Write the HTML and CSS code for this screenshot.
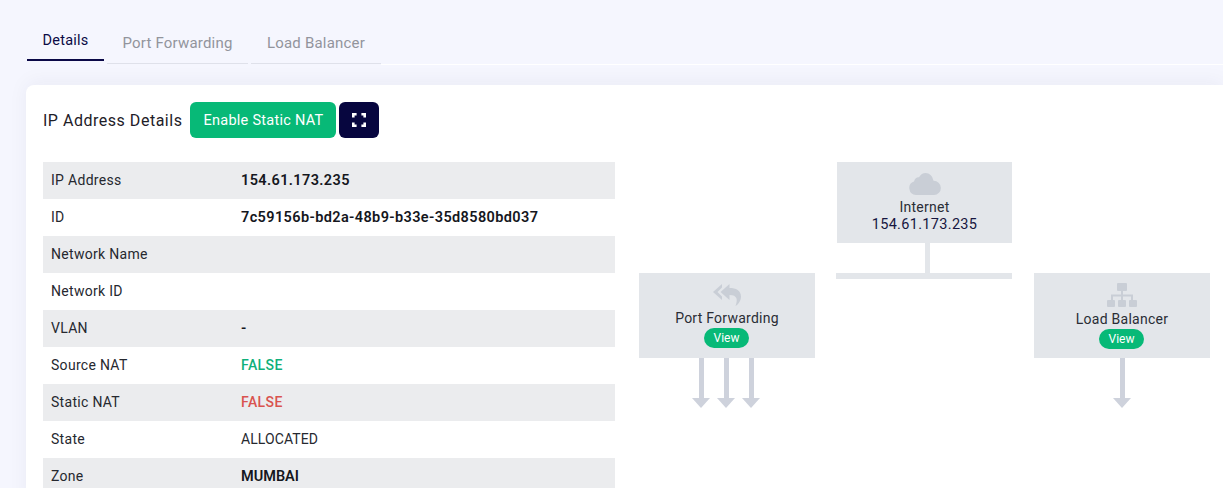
FILE: index.html
```html
<!DOCTYPE html>
<html lang="en">
<head>
<meta charset="utf-8">
<title>IP Address Details</title>
<link rel="stylesheet" href="styles.css">
</head>
<body>
<nav class="tabs">
  <a class="tab tab-details active">Details</a>
  <a class="tab tab-pf">Port Forwarding</a>
  <a class="tab tab-lb">Load Balancer</a>
  <span class="tab-rest"></span>
</nav>
<main class="card">
  <header class="card-head">
    <h2 class="title">IP Address Details</h2>
    <button class="btn btn-green">Enable Static NAT</button>
    <button class="btn btn-navy" aria-label="Expand">
      <svg width="14" height="14" viewBox="0 0 14 14" fill="none" stroke="#fff" stroke-width="2.6"><path d="M1.300 4.600V1.300H4.600M9.400 1.300h3.300V4.600M12.700 9.400v3.300H9.400M4.600 12.700H1.300V9.400"/></svg>
    </button>
  </header>
  <div class="body">
    <table class="info">
      <tr><td class="k">IP Address</td><td class="v b">154.61.173.235</td></tr>
      <tr><td class="k">ID</td><td class="v b">7c59156b-bd2a-48b9-b33e-35d8580bd037</td></tr>
      <tr><td class="k">Network Name</td><td class="v"></td></tr>
      <tr><td class="k">Network ID</td><td class="v"></td></tr>
      <tr><td class="k">VLAN</td><td class="v b">-</td></tr>
      <tr><td class="k">Source NAT</td><td class="v green">FALSE</td></tr>
      <tr><td class="k">Static NAT</td><td class="v red">FALSE</td></tr>
      <tr><td class="k">State</td><td class="v alloc">ALLOCATED</td></tr>
      <tr><td class="k">Zone</td><td class="v b zone">MUMBAI</td></tr>
    </table>
    <div class="diagram">
      <div class="node node-net">
        <svg class="ico" width="32" height="22" viewBox="0 0 32 22" fill="#c9ced6"><path d="M7 22a7 7 0 0 1-2-13.600C6 5 8 4 10 4.300C11.500 1.500 14 0 16.500 0c4 0 7 3 7.500 6.500 .3 .4 .5 .9 .5 1.300A7 7 0 0 1 25 22z"/></svg>
        <span class="name">Internet</span>
        <span class="ip">154.61.173.235</span>
      </div>
      <div class="stem"></div>
      <div class="bus"></div>
      <div class="node node-pf">
        <svg class="ico" width="28" height="23" viewBox="0 0 28 23" fill="#c9ced6"><path d="M9 1 0 9l9 8v-3.500L4.500 9 9 4.500z"/><path d="M16.500 1 7.500 9l9 8v-5c4 0 6 1 7 3.500.5 1.700.2 4.500-1 7.500 3.500-2 5.500-6 5.500-9.500C28 7.500 23 5 16.500 5z"/></svg>
        <span class="name">Port Forwarding</span>
        <span class="pill">View</span>
      </div>
      <div class="node node-lb">
        <svg class="ico" width="30" height="24" viewBox="0 0 30 24" fill="#c9ced6"><rect x="10" y="0" width="10" height="8" rx="1"/><rect x="0" y="17" width="8" height="7" rx="1"/><rect x="11" y="17" width="8" height="7" rx="1"/><rect x="22" y="17" width="8" height="7" rx="1"/><path d="M14 8h2v3.500h10V17h-2v-3.500H16V17h-2v-3.500H6V17H4v-5.500h10z"/></svg>
        <span class="name">Load Balancer</span>
        <span class="pill">View</span>
      </div>
      <span class="arrow a1"></span>
      <span class="arrow a2"></span>
      <span class="arrow a3"></span>
      <span class="arrow a4"></span>
    </div>
  </div>
</main>
</body>
</html>
```
FILE: styles.css
```css
html, body { margin: 0; height: 488px; overflow: hidden; }
body {
  background: #f5f6fe;
  font-family: Roboto, "Liberation Sans", sans-serif;
  color: #1f2430;
  font-size: 14px;
}
.tabs {
  display: flex;
  align-items: flex-end;
  height: 65px;
  padding-left: 27px;
  gap: 3px;
}
.tab {
  box-sizing: border-box;
  height: 36px;
  padding-top: 6px;
  text-align: center;
  color: #92949c;
  font-size: 15px;
  letter-spacing: .2px;
  border-bottom: 1px solid #dfe1ea;
}
.tab-details {
  width: 77px;
  height: 32px;
  margin-bottom: 4px;
  padding-top: 3px;
  color: #0b0a45;
  font-size: 14.500px;
  border-bottom: 2px solid #0a0847;
}
.tab-pf { width: 141px; margin-bottom: 1px; }
.tab-lb { width: 130px; margin-bottom: 1px; }
.tab-rest { flex: 1; margin-left: -3px; border-bottom: 1px solid #fff; }
.card {
  margin: 20px 0 0 26px;
  background: #fff;
  border-radius: 8px 0 0 0;
  padding: 17px 0 0 17px;
  height: 403px;
  box-shadow: 0 -3px 20px rgba(30, 30, 80, .05);
}
.card-head { display: flex; align-items: center; height: 36px; }
.title { margin: 0 8px 0 0; font-size: 16px; font-weight: 400; letter-spacing: .52px; color: #1e2028; }
.btn { border: 0; border-radius: 6px; height: 36px; font: inherit; color: #fff; padding: 0; display: flex; align-items: center; justify-content: center; }
.btn-green { background: #07b977; width: 146px; font-size: 14.500px; letter-spacing: .27px; margin-right: 3px; }
.btn-navy { background: #07063f; width: 40px; }
.body { display: flex; margin-top: 24px; }
.info { width: 572px; border-collapse: collapse; flex: none; }
.info tr { height: 37px; }
.info tr:nth-child(odd) { background: #ebecee; }
.info td { padding: 0 0 1px; letter-spacing: .3px; }
.k { width: 190px; padding-left: 8px !important; color: #26282f; }
.v { color: #26282f; }
.info .b { font-size: 14.500px; letter-spacing: .38px; font-weight: 600; color: #15171d; }
.info .green { color: #10b07a; font-weight: 500; letter-spacing: .4px; }
.info .red { color: #d9534f; font-weight: 500; letter-spacing: .4px; }
.info .alloc { letter-spacing: .1px; }
.info .zone { letter-spacing: 0; }
.diagram { position: relative; flex: 1; }
.node {
  position: absolute;
  display: flex;
  flex-direction: column;
  align-items: center;
  background: #e3e6ea;
  box-sizing: border-box;
}
.node-net { left: 222px; top: 0; width: 175px; height: 81px; padding-top: 11px; }
.node-pf { left: 24px; top: 111px; width: 176px; height: 85px; padding-top: 10px; }
.node-lb { left: 419px; top: 111px; width: 176px; height: 85px; padding-top: 10px; }
.ico { flex: none; }
.name { font-size: 14px; line-height: 18px; margin-top: 3px; letter-spacing: .25px; color: #2a2d35; }
.ip { font-size: 14.500px; line-height: 16px; margin-top: 1px; letter-spacing: .32px; color: #16163f; }
.pill { background: #07b977; color: #fff; font-size: 12px; line-height: 20px; height: 20px; width: 45px; margin: 1px 1px 0 0; text-align: center; border-radius: 10px; }
.stem { position: absolute; left: 310px; top: 81px; width: 5px; height: 31px; background: #e3e6ea; }
.bus { position: absolute; left: 221px; top: 111px; width: 176px; height: 6px; background: #e3e6ea; }
.arrow { position: absolute; top: 196px; width: 5px; height: 40px; background: #ced2dc; }
.arrow::after {
  content: "";
  position: absolute;
  left: -7px;
  top: 40px;
  border-left: 9.500px solid transparent;
  border-right: 9.500px solid transparent;
  border-top: 10px solid #ced2dc;
}
.a1 { left: 84px; }
.a2 { left: 109px; }
.a3 { left: 134px; }
.a4 { left: 505px; }
```
